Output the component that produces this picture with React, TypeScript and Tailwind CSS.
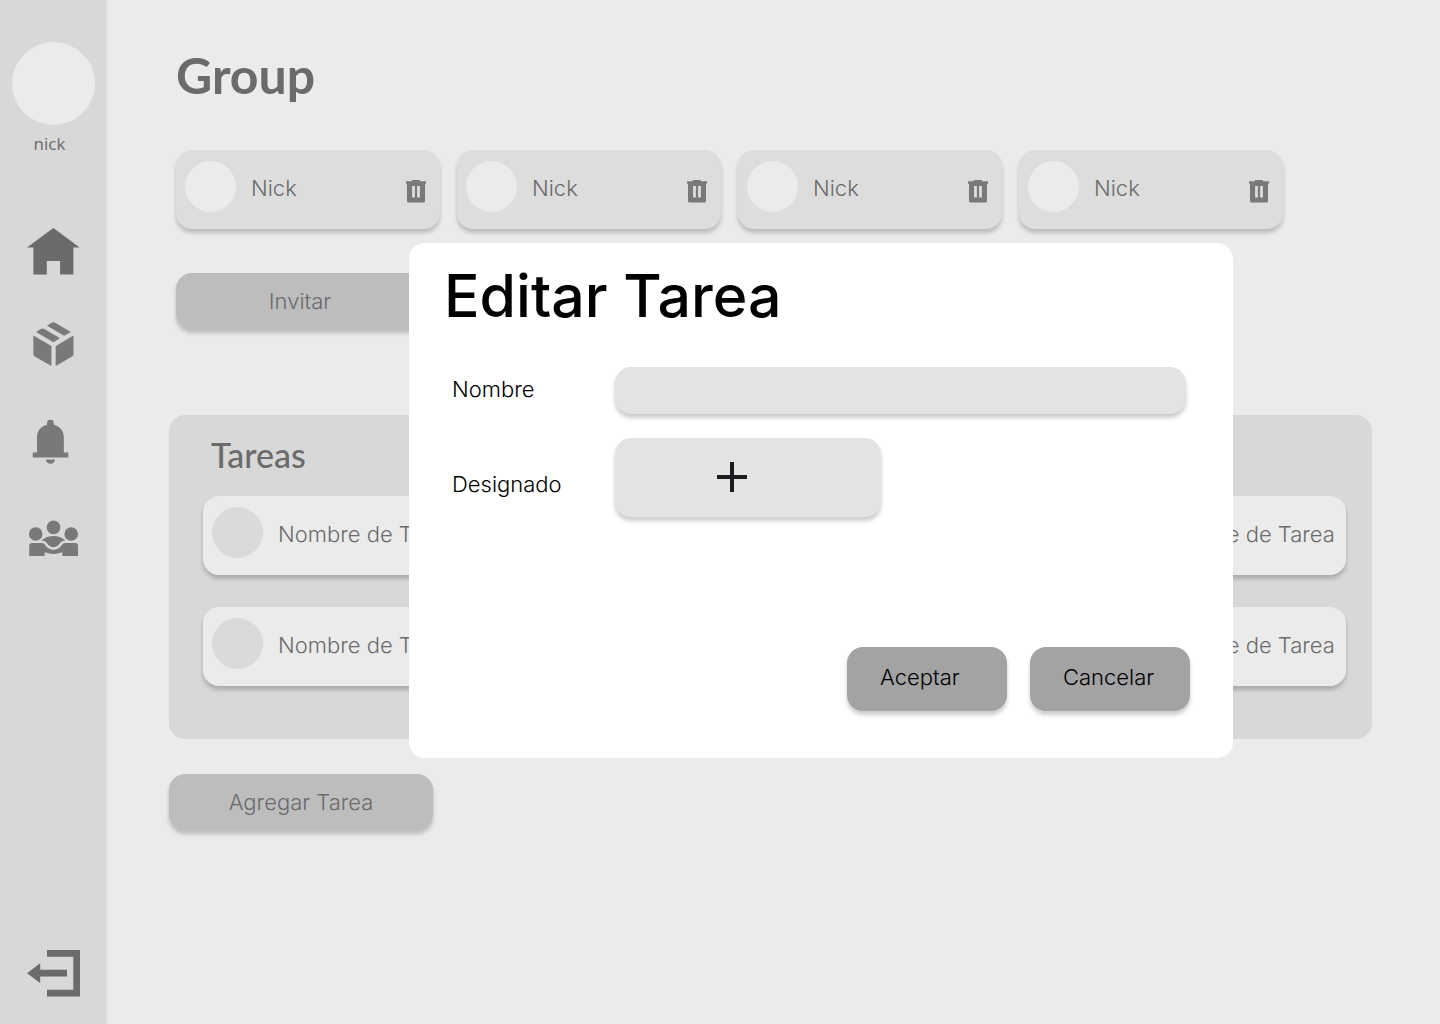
import React from "react";

const cardShadow = "shadow-[0_4px_4px_rgba(0,0,0,0.2)]";

function HomeIcon() {
  return (
    <svg viewBox="25 222 56 56" className="size-14 fill-[#6b6b6b]" aria-hidden="true">
      <path d="M53.4 228 79.7 247.5H73.4V274.5H60.1V261H46.8V274.5H33.4V247.5H27Z" />
    </svg>
  );
}

function PackageIcon() {
  return (
    <svg viewBox="25 318 56 56" className="size-14 fill-[#79797b]" aria-hidden="true">
      <path d="M33.4 335.5 51.4 346V366L34.8 356.6Q33.4 355.7 33.4 354Z" />
      <path d="M73.5 335.5 55.7 346V366L72.1 356.6Q73.5 355.7 73.5 354Z" />
      <path d="M47 325.7 51.7 322.7Q53.4 321.7 55.1 322.7L70.8 332 64.2 335.8Z" />
      <path d="M36 332 40.8 328.9Q42.6 327.9 44.4 328.9L60 338.2 53.4 342.2Z" />
    </svg>
  );
}

function BellIcon() {
  return (
    <svg viewBox="25 414 56 56" className="size-14 fill-[#79797b]" aria-hidden="true">
      <path d="M47 424.8V423.1A3.4 3.4 0 0 1 53.8 423.1V424.8C60 426.3 63.8 431 63.8 437V452.5H68.3V457.5H32.7V452.5H37V437C37 431 40.8 426.3 47 424.8Z" />
      <path d="M46 459.5H55A4.5 4.3 0 0 1 46 459.5Z" />
    </svg>
  );
}

function PeopleIcon() {
  return (
    <svg viewBox="25 510 56 56" className="size-14 fill-[#79797b]" aria-hidden="true">
      <circle cx="35.7" cy="534" r="6.8" />
      <circle cx="53.5" cy="527.4" r="6.8" />
      <circle cx="71.2" cy="534" r="6.8" />
      <path d="M41.3 540.3Q53.5 531.7 65.6 540.3C61 541 60.4 543 58.6 545Q53.5 549.5 48.4 545C46.6 543 46 541 41.3 540.3Z" />
      <path d="M29.2 556V546Q29.2 543 32.2 543H41C44.5 543 45 545 47 547.2Q53.5 552.6 60 547.2C62 545 62.5 543 66 543H75Q78 543 78 546V556H62.3V552.2Q53.5 555.6 44.7 552.2V556Z" />
    </svg>
  );
}

function ExitIcon() {
  return (
    <svg viewBox="25 945 56 56" className="size-14 fill-[#6b6b6b]" aria-hidden="true">
      <path d="M47 950H80V996.5H47V989.8H73.3V956.7H47Z" />
      <path d="M27 973.2 40.2 963.3V969.8H67V976.5H40.2V983Z" />
    </svg>
  );
}

function TrashIcon() {
  return (
    <svg viewBox="0 0 20 23" className="h-[23px] w-5 fill-[#79797b]" aria-hidden="true">
      <path
        fillRule="evenodd"
        d="M5.7 1.2V0.8Q5.7 0 6.5 0H13.2Q14 0 14 0.8V1.2H20V3.8H19V21Q19 22.5 17.5 22.5H2.5Q1 22.5 1 21V3.8H0V1.2ZM6.1 6V17.5H8.9V6ZM11.1 6V17.5H13.9V6Z"
      />
    </svg>
  );
}

const navItems = [
  { label: "Inicio", Icon: HomeIcon },
  { label: "Paquetes", Icon: PackageIcon },
  { label: "Notificaciones", Icon: BellIcon },
  { label: "Grupos", Icon: PeopleIcon },
];

function Sidebar() {
  return (
    <aside className="flex w-[106px] shrink-0 flex-col items-center bg-[#d8d8d8] pt-[42px] pb-[23px] shadow-[0_0_4px_rgba(0,0,0,0.12)]">
      <div className="size-[83px] rounded-full bg-[#ebebeb]" />
      <p className="mt-[7px] pr-[7px] font-['Open_Sans',sans-serif] text-[17px] leading-6 font-normal">nick</p>
      <nav className="mt-[66px] flex flex-col gap-10">
        {navItems.map(({ label, Icon }) => (
          <a key={label} href="#" aria-label={label} className="block">
            <Icon />
          </a>
        ))}
      </nav>
      <button type="button" aria-label="Salir" className="mt-auto">
        <ExitIcon />
      </button>
    </aside>
  );
}

function MemberCard() {
  return (
    <li className={`flex h-[79px] items-center rounded-2xl bg-[#dddddd] pr-3.5 pb-1.5 pl-[9px] ${cardShadow}`}>
      <span className="size-[51px] shrink-0 rounded-full bg-[#ebebeb]" />
      <span className="ml-[15px] pt-0.5">Nick</span>
      <button type="button" aria-label="Eliminar a Nick" className="ml-auto pt-2.5">
        <TrashIcon />
      </button>
    </li>
  );
}

function TaskCard() {
  return (
    <li className={`flex h-[79px] items-center rounded-2xl bg-[#ebebeb] pb-1.5 pl-[9px] ${cardShadow}`}>
      <span className="size-[51px] shrink-0 rounded-full bg-[#dadada]" />
      <span className="ml-[15px] pt-0.5 whitespace-nowrap">Nombre de Tarea</span>
    </li>
  );
}

function EditTaskDialog() {
  return (
    <div className="fixed inset-0 flex items-center justify-center pb-[23px] pl-[202px]">
      <div
        role="dialog"
        aria-modal="true"
        aria-labelledby="dialog-title"
        className="w-full max-w-[824px] rounded-2xl bg-white pt-5 pr-[43px] pb-[47px] pl-[43px] text-black"
      >
        <h2 id="dialog-title" className="-ml-2 text-[59px] leading-[66px] font-medium">
          Editar Tarea
        </h2>
        <form>
          <div className="mt-[38px] grid grid-cols-[163px_1fr] items-center gap-y-6 pr-1">
            <label htmlFor="task-name" className="pb-1">
              Nombre
            </label>
            <input id="task-name" type="text" className={`h-[47px] w-full rounded-2xl bg-[#e3e3e3] px-4 ${cardShadow}`} />
            <label htmlFor="assignee" className="pt-3">
              Designado
            </label>
            <button
              id="assignee"
              type="button"
              aria-label="Agregar designado"
              className={`flex h-[79px] w-[266px] items-center justify-center rounded-2xl bg-[#e3e3e3] pr-8 pb-0.5 ${cardShadow}`}
            >
              <svg viewBox="0 0 30 30" className="size-[30px] fill-[#1c1b1f]" aria-hidden="true">
                <path d="M13 0H17V13H30V17H17V30H13V17H0V13H13Z" />
              </svg>
            </button>
          </div>
          <div className="mt-[130px] flex justify-end gap-[23px]">
            <button type="button" className={`h-16 w-40 rounded-2xl bg-[#a3a3a3] pb-1 pl-[33px] text-left ${cardShadow}`}>
              Aceptar
            </button>
            <button type="button" className={`h-16 w-40 rounded-2xl bg-[#a3a3a3] pb-1 pl-[33px] text-left ${cardShadow}`}>
              Cancelar
            </button>
          </div>
        </form>
      </div>
    </div>
  );
}

export default function App() {
  return (
    <div className="flex min-h-screen bg-[#ebebeb] font-['Inter',sans-serif] text-[22px] leading-7 font-light text-[#6b6b6b]">
      <Sidebar />
      <main className="min-w-0 flex-1 pt-[43px] pr-[68px] pl-[63px]">
        <div className="pl-[7px]">
          <h1 className="font-['Lato',sans-serif] text-[50px] leading-[64px] font-bold">Group</h1>
          <ul className="mt-[43px] grid max-w-[1107px] grid-cols-4 gap-[17px]">
            {[0, 1, 2, 3].map((i) => (
              <MemberCard key={i} />
            ))}
          </ul>
          <button type="button" className={`mt-11 block h-14 w-[264px] rounded-2xl bg-[#bdbdbd] pr-4 ${cardShadow}`}>
            Invitar
          </button>
        </div>
        <section className="mt-[86px] rounded-2xl bg-[#d8d8d8] pt-5 pr-[26px] pb-[53px] pl-[34px]">
          <h2 className="ml-2 font-['Lato',sans-serif] text-[34px] leading-10 font-medium">Tareas</h2>
          <ul className="mt-[21px] grid grid-cols-4 gap-x-[29px] gap-y-8">
            {[0, 1, 2, 3, 4, 5, 6, 7].map((i) => (
              <TaskCard key={i} />
            ))}
          </ul>
        </section>
        <button type="button" className={`mt-[35px] block h-14 w-[264px] rounded-2xl bg-[#bdbdbd] ${cardShadow}`}>
          Agregar Tarea
        </button>
      </main>
      <EditTaskDialog />
    </div>
  );
}
